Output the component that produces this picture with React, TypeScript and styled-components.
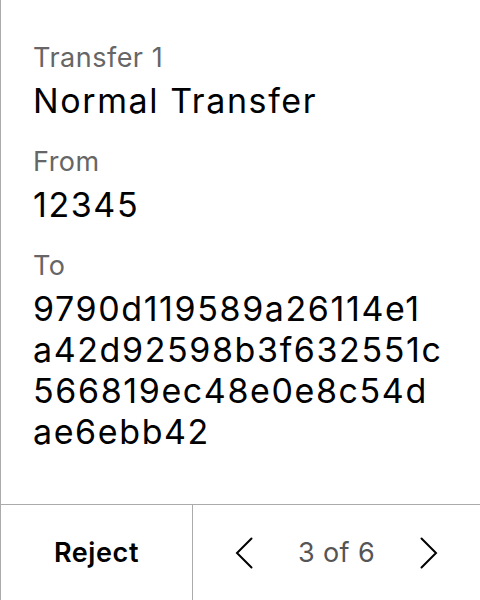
import React from 'react';
import styled, {createGlobalStyle} from 'styled-components';

const Global = createGlobalStyle`
  html, body {
    margin: 0;
    padding: 0;
    background: #fff;
  }
  body {
    font-family: 'Inter', 'Noto Sans', sans-serif;
  }
`;

type FieldProps = {
  label: string,
  lines: string[]
}

const Field: React.FC<FieldProps> = (props: FieldProps) => {
  return (
    <FieldBox>
      <Label>{props.label}</Label>
      <Value>
        {props.lines.map((l, i) => <div key={i}>{l}</div>)}
      </Value>
    </FieldBox>
  );
};

const Chevron = ({dir}: {dir: 'left' | 'right'}) => (
  <svg width="18" height="32" viewBox="0 0 18 32" fill="none">
    <path
      d={dir === 'left' ? 'M16.5 1.5 L2 16 L16.5 30.5' : 'M1.5 1.5 L16 16 L1.5 30.5'}
      stroke="#000"
      strokeWidth="2"
      strokeLinecap="round"
    />
  </svg>
);

const App: React.FC = () => {
  return (
    <Screen>
      <Global />
      <Content>
        <Field label="Transfer 1" lines={['Normal Transfer']} />
        <Field label="From" lines={['12345']} />
        <Field
          label="To"
          lines={['9790d119589a26114e1', 'a42d92598b3f632551c', '566819ec48e0e8c54d', 'ae6ebb42']}
        />
      </Content>
      <Footer>
        <RejectButton>Reject</RejectButton>
        <Pager>
          <NavButton><Chevron dir="left" /></NavButton>
          <PageCount>3 of 6</PageCount>
          <NavButton><Chevron dir="right" /></NavButton>
        </Pager>
      </Footer>
    </Screen>
  );
};

export default App;

const Screen = styled.div`
  height: 600px;
  box-sizing: border-box;
  border-left: 1px solid #ababab;
  display: flex;
  flex-direction: column;
`;

const Content = styled.div`
  flex: 1;
  padding: 42px 32px 0 32px;
  display: flex;
  flex-direction: column;
  gap: 25px;
`;

const FieldBox = styled.div`
  display: flex;
  flex-direction: column;
  gap: 6px;
`;

const Label = styled.div`
  font-size: 27px;
  line-height: 32px;
  letter-spacing: 0.5px;
  color: #666;
`;

const Value = styled.div`
  font-size: 34px;
  line-height: 41px;
  letter-spacing: 1.6px;
  color: #000;
`;

const Footer = styled.div`
  height: 96px;
  box-sizing: border-box;
  border-top: 1px solid #ababab;
  display: grid;
  grid-template-columns: 192px 1fr;
`;

const RejectButton = styled.div`
  border-right: 1px solid #ababab;
  display: flex;
  align-items: center;
  justify-content: center;
  font-size: 27px;
  font-weight: 600;
  letter-spacing: 0.6px;
  color: #000;
`;

const Pager = styled.div`
  display: flex;
  align-items: center;
  justify-content: center;
  gap: 45px;
`;

const NavButton = styled.div`
  display: flex;
  align-items: center;
  justify-content: center;
`;

const PageCount = styled.div`
  font-size: 27px;
  letter-spacing: 0.4px;
  color: #555;
`;
